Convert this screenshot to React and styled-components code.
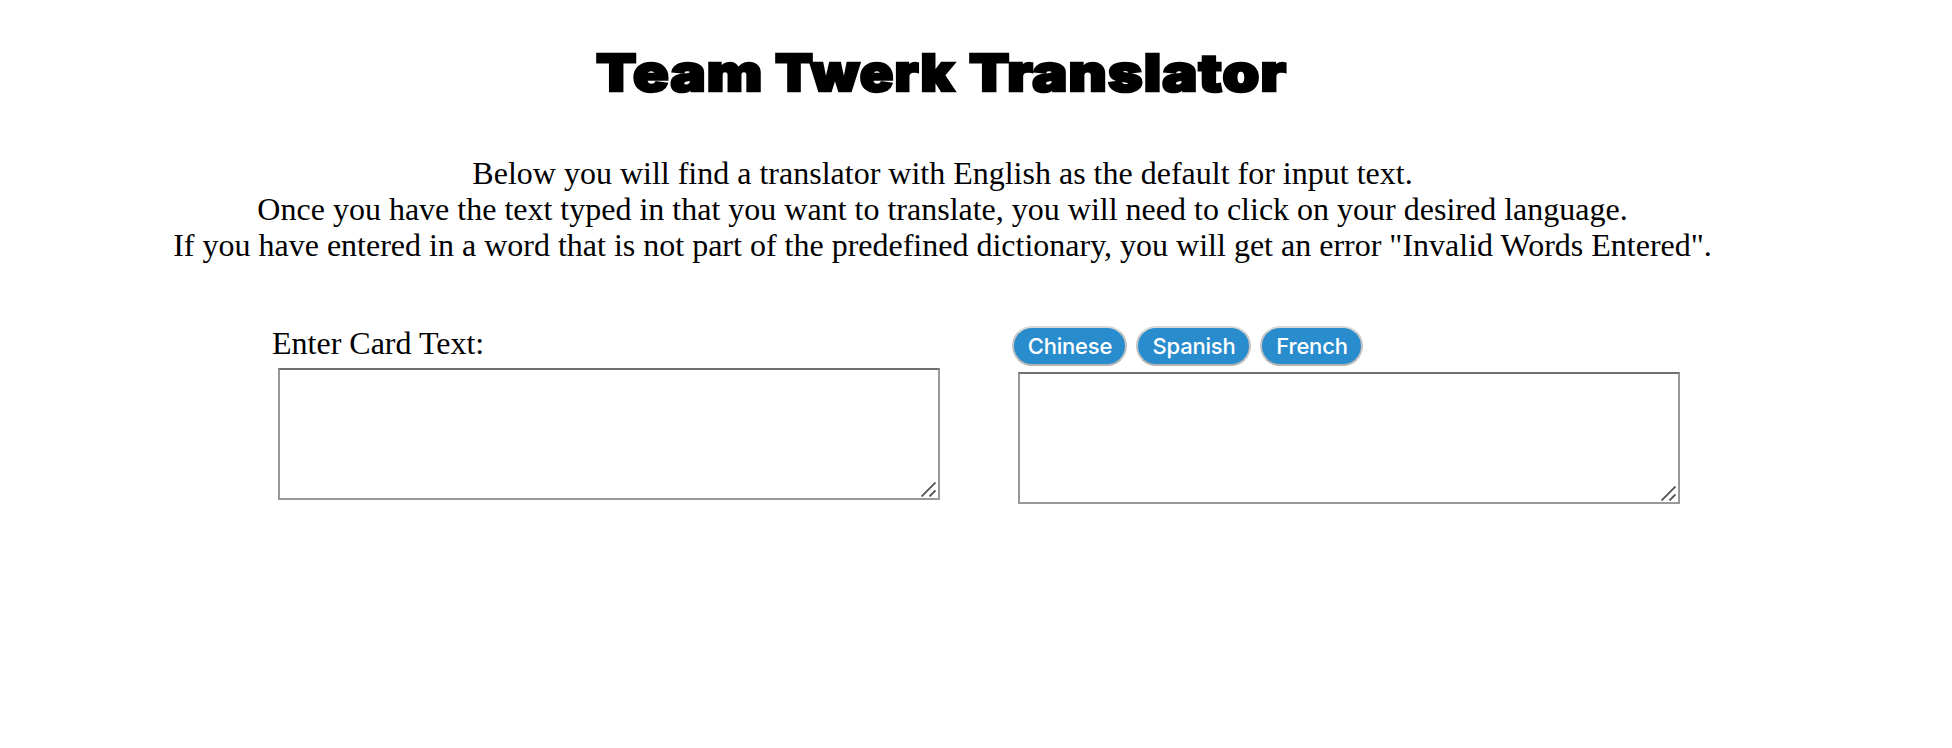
import React from "react";
import styled, { createGlobalStyle } from "styled-components";

const GlobalStyle = createGlobalStyle`
  body {
    margin: 0;
    background: #fff;
    color: #000;
    font-family: "Liberation Serif", "Times New Roman", serif;
    font-size: 32px;
    line-height: 36px;
  }
`;

const Page = styled.main`
  box-sizing: border-box;
  width: 1885px;
  height: 748px;
  overflow: hidden;
`;

const Title = styled.h1`
  display: flex;
  margin: 38px 0 0 596px;
  height: 70px;
  font-family: Inter, sans-serif;
  font-size: 51px;
  font-weight: 900;
  line-height: 70px;
  white-space: pre;
  -webkit-text-stroke: 2.5px #000;
`;

const Word = styled.span`
  width: ${(p) => p.$width}px;
  letter-spacing: 1px;
  transform: scaleX(${(p) => p.$stretch});
  transform-origin: left;
`;

const Intro = styled.div`
  margin-top: 47px;
  text-align: center;
`;

const Line = styled.p`
  margin: 0;
  height: 36px;
  white-space: nowrap;
`;

const Translator = styled.section`
  display: flex;
  gap: 72px;
  margin: 62px 0 0 272px;
`;

const Column = styled.div`
  width: 668px;
`;

const Label = styled.label`
  display: block;
  height: 43px;
`;

const Languages = styled.div`
  display: flex;
  gap: 9px;
  height: 46px;
  padding: 1px 0 0;
`;

const LanguageButton = styled.button`
  box-sizing: border-box;
  width: ${(p) => p.$width}px;
  height: 40px;
  padding: 0 0 0 1px;
  border: 2px solid;
  border-color: #d8d8d8 #c4c4c4 #b4b4b4;
  border-radius: 20px;
  background: #298ccd;
  color: #fff;
  font-family: Inter, sans-serif;
  font-size: 22px;
  font-weight: 500;
  letter-spacing: -0.2px;
  line-height: 36px;
`;

const Field = styled.div`
  position: relative;
  width: 662px;
  height: 132px;
  margin-left: 6px;
`;

const TextArea = styled.textarea`
  display: block;
  box-sizing: border-box;
  width: 100%;
  height: 100%;
  margin: 0;
  padding: 4px;
  border: 2px solid;
  border-color: #707070 #999 #999;
  border-radius: 0;
  background: #fff;
  outline: none;
  resize: none;
  font-size: 22px;
`;

const Grip = styled.svg`
  position: absolute;
  right: 4px;
  bottom: 3px;
  pointer-events: none;
`;

const TextField = (props) => (
  <Field>
    <TextArea {...props} />
    <Grip width="15" height="15" viewBox="0 0 15 15" stroke="#555" strokeWidth="1.9">
      <path d="M0.5 14.5 14.5 0.5M8.5 14.5 14.5 8.5" />
    </Grip>
  </Field>
);

export default function App() {
  return (
    <Page>
      <GlobalStyle />
      <Title>
        <Word $width={179} $stretch={1.154}>Team </Word>
        <Word $width={194} $stretch={1.086}>Twerk </Word>
        <Word $width={320} $stretch={1.153}>Translator</Word>
      </Title>
      <Intro>
        <Line>Below you will find a translator with English as the default for input text.</Line>
        <Line>Once you have the text typed in that you want to translate, you will need to click on your desired language.</Line>
        <Line>If you have entered in a word that is not part of the predefined dictionary, you will get an error "Invalid Words Entered".</Line>
      </Intro>
      <Translator>
        <Column>
          <Label htmlFor="card-text">Enter Card Text:</Label>
          <TextField id="card-text" />
        </Column>
        <Column>
          <Languages>
            <LanguageButton $width={115}>Chinese</LanguageButton>
            <LanguageButton $width={115}>Spanish</LanguageButton>
            <LanguageButton $width={103}>French</LanguageButton>
          </Languages>
          <TextField readOnly aria-label="Translation" />
        </Column>
      </Translator>
    </Page>
  );
}
